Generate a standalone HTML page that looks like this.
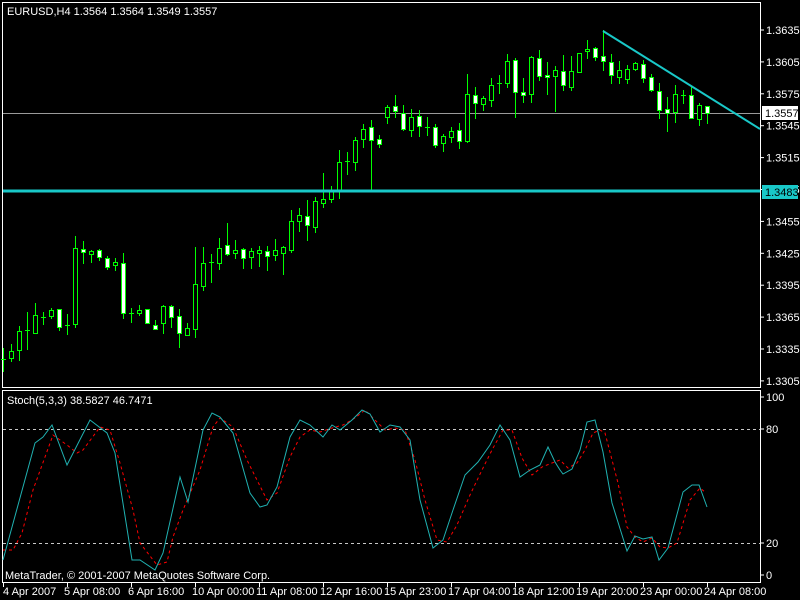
<!DOCTYPE html>
<html><head><meta charset="utf-8"><style>
html,body{margin:0;padding:0;background:#000;width:800px;height:600px;overflow:hidden}
svg{display:block}
text{font-family:"Liberation Sans",sans-serif;font-size:11px;fill:#fff}
</style></head><body>
<svg id="s" width="800" height="600" xmlns="http://www.w3.org/2000/svg">
<rect width="800" height="600" fill="#000"/>
<!-- frames -->
<path d="M2.5 2.5H760.5V387.5H2.5Z M2.5 390.5H760.5V582.5H2.5Z" fill="none" stroke="#fff" stroke-width="1"/>
<text x="7" y="15">EURUSD,H4  1.3564 1.3564 1.3549 1.3557</text>
<text x="7" y="404">Stoch(5,3,3) 38.5827 46.7471</text>
<text x="5" y="579">MetaTrader, © 2001-2007 MetaQuotes Software Corp.</text>
<line x1="3" y1="113.5" x2="760" y2="113.5" stroke="#9a9a9a" stroke-width="1"/>
<g id="c"></g>
<line x1="3" y1="191" x2="760" y2="191" stroke="#19c8c8" stroke-width="3"/>
<line x1="603" y1="31" x2="760" y2="129" stroke="#19c8c8" stroke-width="2"/>
<g id="ax"></g>
<rect x="762" y="106" width="36" height="14" fill="#fff"/>
<text x="765" y="117" style="fill:#000">1.3557</text>
<rect x="762" y="185" width="36" height="14" fill="#19c8c8"/>
<text x="765" y="196" style="fill:#000">1.3483</text>
<line x1="3" y1="429.5" x2="760" y2="429.5" stroke="#c8c8c8" stroke-dasharray="3,3"/>
<line x1="3" y1="543.5" x2="760" y2="543.5" stroke="#c8c8c8" stroke-dasharray="3,3"/>
<polyline fill="none" stroke="#ff0000" stroke-dasharray="3,3" stroke-width="1" points="3,550 13,550 22,533 33,490 53,435 67,445 77,453 83,450 100,427 110,430 120,463 133,510 140,543 157,565 167,562 173,537 183,510 200,470 213,427 220,418 233,427 247,460 267,500 277,493 290,457 300,437 310,430 320,432 332,428 343,425 355,418 365,410 375,420 385,430 395,428 405,430 415,460 425,500 437,540 447,542 457,525 470,495 482,470 492,450 503,430 512,430 522,458 532,475 542,467 552,463 560,460 568,468 577,463 585,450 593,433 600,430 605,433 618,483 627,527 635,537 643,542 652,538 660,547 668,548 677,543 690,500 700,488 705,492"/>
<polyline fill="none" stroke="#20b2b2" stroke-width="1" points="3,560 35,443 43,437 52,425 67,465 90,420 107,433 115,453 132,560 140,560 155,570 163,553 180,477 188,502 203,430 212,413 220,417 233,433 250,493 260,507 267,505 277,487 290,437 300,420 310,425 323,437 332,425 340,430 352,420 362,410 370,414 380,432 390,425 400,427 410,440 420,500 433,548 443,540 453,510 465,475 478,462 490,445 500,425 510,440 520,477 530,470 540,465 548,447 555,462 560,470 563,474 572,469 580,450 587,422 595,420 603,452 612,503 627,551 635,536 643,539 652,537 659,560 668,548 683,492 692,485 699,485 707,507"/>
<text x="766" y="401">100</text><text x="766" y="433">80</text><text x="766" y="547">20</text><text x="766" y="579">0</text>
</svg>
<script>
var d=[[3,348,371,359,359],[11,344,361,351,358,'u'],[19,326,360,331,350,'u'],[27,312,349,330,330],[35,303,333,315,333,'u'],[43,312,324,317,317],[51,308,318,310,316,'u'],[59,309,330,309,327,'d'],[67,314,334,325,325],[75,236,327,248,324,'u'],[83,241,263,249,252,'d'],[91,250,262,251,254,'u'],[99,249,260,250,257,'d'],[107,256,269,258,267,'d'],[115,258,270,262,265,'u'],[123,253,318,263,313,'d'],[131,308,322,313,313],[139,305,315,310,313,'u'],[147,309,323,309,323,'d'],[155,320,329,325,329,'d'],[163,305,333,306,323,'u'],[171,305,327,306,317,'d'],[179,309,347,316,333,'d'],[187,323,335,328,335,'u'],[195,247,337,284,329,'u'],[203,247,290,263,286,'u'],[211,254,282,262,262],[219,238,269,248,263,'u'],[227,223,255,245,254,'d'],[235,240,258,250,253,'u'],[243,248,268,249,258,'d'],[251,248,268,251,257,'u'],[259,246,266,250,253,'u'],[267,246,270,251,256,'d'],[275,239,260,250,255,'u'],[283,246,274,247,253,'u'],[291,210,252,221,250,'u'],[299,208,231,215,221,'u'],[307,200,240,216,225,'d'],[315,197,232,201,227,'u'],[323,173,207,199,203,'u'],[331,186,202,190,199,'u'],[339,150,198,162,191,'u'],[347,152,174,161,161],[355,137,170,140,162,'u'],[363,124,147,129,139,'u'],[371,120,191,127,140,'d'],[379,135,147,139,144,'d'],[387,105,123,107,117,'u'],[395,95,117,106,111,'d'],[403,105,130,113,129,'d'],[411,109,136,117,130,'u'],[419,110,136,116,126,'d'],[427,117,135,127,127],[435,124,147,127,145,'d'],[443,134,151,136,143,'u'],[451,127,142,131,137,'u'],[459,123,148,130,141,'d'],[467,74,142,94,141,'u'],[475,87,118,95,103,'d'],[483,96,110,98,104,'u'],[491,78,106,85,100,'u'],[499,75,93,83,83],[507,54,87,61,83,'u'],[515,58,117,60,92,'d'],[523,78,102,92,95,'d'],[531,56,102,57,94,'u'],[539,50,80,58,76,'d'],[547,62,94,75,77,'d'],[555,66,111,70,76,'u'],[563,55,90,71,85,'d'],[571,56,90,71,87,'u'],[579,53,72,53,72,'u'],[587,40,58,49,51,'u'],[595,47,60,48,57,'d'],[603,30,70,56,61,'d'],[611,54,83,62,75,'d'],[619,61,83,70,77,'u'],[627,65,83,69,79,'u'],[635,62,70,63,69,'u'],[643,60,82,64,78,'d'],[651,74,91,77,90,'d'],[659,83,118,91,110,'d'],[667,97,131,109,113,'d'],[675,85,122,94,112,'u'],[683,90,103,95,95],[691,87,118,95,118,'d'],[699,103,125,105,119,'u'],[707,106,123,106,113,'d']];
var ns="http://www.w3.org/2000/svg",g=document.getElementById('c'),h='';
d.forEach(function(c){var x=c[0]+0.5;h+='<line x1="'+x+'" y1="'+c[1]+'" x2="'+x+'" y2="'+(c[2]+1)+'" stroke="#00ff00"/>';
if(!c[5]){h+='<line x1="'+(c[0]-2)+'" y1="'+(c[3]+0.5)+'" x2="'+(c[0]+3)+'" y2="'+(c[3]+0.5)+'" stroke="#00ff00"/>';}
else{h+='<rect x="'+(c[0]-1.5)+'" y="'+(c[3]+0.5)+'" width="4" height="'+Math.max(1,c[4]-c[3])+'" fill="'+(c[5]=='d'?'#fff':'#000')+'" stroke="#00ff00"/>';}});
g.innerHTML=h;
var a='',p=['1.3635','1.3605','1.3575','1.3545','1.3515','1.3485','1.3455','1.3425','1.3395','1.3365','1.3335','1.3305'];
p.forEach(function(v,i){var y=30+i*31.9;a+='<line x1="760" y1="'+y+'" x2="764" y2="'+y+'" stroke="#fff"/><text x="766" y="'+(y+4)+'">'+v+'</text>';});
[397,429,543,575].forEach(function(y){a+='<line x1="760" y1="'+y+'" x2="764" y2="'+y+'" stroke="#fff"/>';});
var t=[[3,'4 Apr 2007'],[67,'5 Apr 08:00'],[131,'6 Apr 16:00'],[195,'10 Apr 00:00'],[259,'11 Apr 08:00'],[323,'12 Apr 16:00'],[387,'15 Apr 23:00'],[451,'17 Apr 04:00'],[515,'18 Apr 12:00'],[579,'19 Apr 20:00'],[643,'23 Apr 00:00'],[707,'24 Apr 08:00']];
t.forEach(function(k){a+='<line x1="'+(k[0]+0.5)+'" y1="582" x2="'+(k[0]+0.5)+'" y2="587" stroke="#fff"/><text x="'+(k[0]==3?3:k[0]-3)+'" y="595">'+k[1]+'</text>';});
document.getElementById('ax').innerHTML=a;
</script>
</body></html>
